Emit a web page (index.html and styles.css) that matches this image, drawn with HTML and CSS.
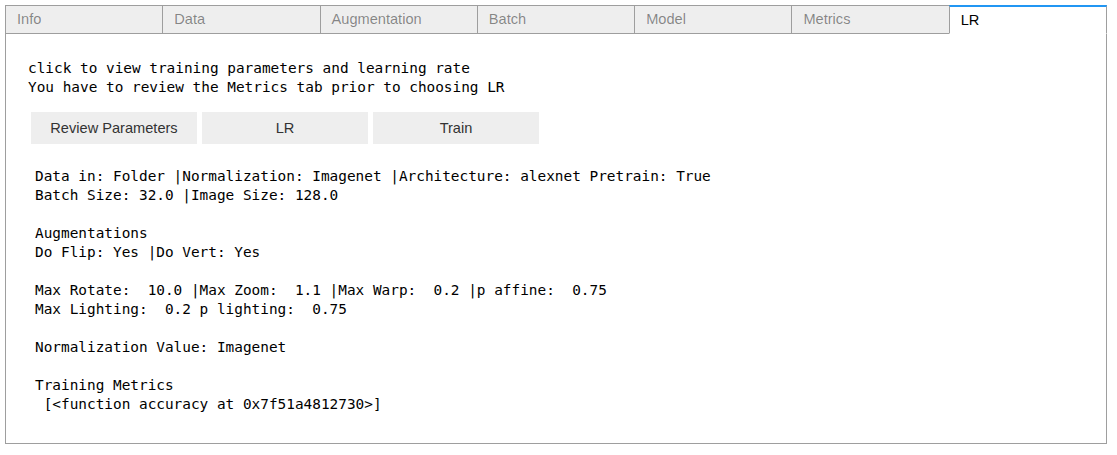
FILE: index.html
```html
<!DOCTYPE html>
<html>
<head>
<meta charset="utf-8">
<link rel="stylesheet" href="styles.css">
</head>
<body>
<div class="tabwidget">
  <div class="tabbar">
    <div class="tab">Info</div>
    <div class="tab">Data</div>
    <div class="tab">Augmentation</div>
    <div class="tab">Batch</div>
    <div class="tab">Model</div>
    <div class="tab">Metrics</div>
    <div class="tab active">LR</div>
  </div>
  <div class="panel">
    <div class="intro">click to view training parameters and learning rate<br>You have to review the Metrics tab prior to choosing LR</div>
    <div class="buttons">
      <button class="btn">Review Parameters</button>
      <button class="btn">LR</button>
      <button class="btn">Train</button>
    </div>
<pre class="output">Data in: Folder |Normalization: Imagenet |Architecture: alexnet Pretrain: True
Batch Size: 32.0 |Image Size: 128.0

Augmentations
Do Flip: Yes |Do Vert: Yes

Max Rotate:  10.0 |Max Zoom:  1.1 |Max Warp:  0.2 |p affine:  0.75
Max Lighting:  0.2 p lighting:  0.75

Normalization Value: Imagenet

Training Metrics
 [&lt;function accuracy at 0x7f51a4812730&gt;]</pre>
  </div>
</div>
</body>
</html>
```
FILE: styles.css
```css
html, body {
  margin: 0;
  padding: 0;
  background: #ffffff;
}

.tabwidget {
  padding: 5px 0 0 5px;
  width: 1102px;
}

.tabbar {
  display: flex;
  height: 29px;
}

.tab {
  flex: 1 1 0;
  box-sizing: border-box;
  height: 29px;
  border: 1px solid #9e9e9e;
  margin-left: -1px;
  background: #eeeeee;
  color: rgba(0, 0, 0, 0.45);
  font-family: "Liberation Sans", Arial, sans-serif;
  font-size: 14.6px;
  line-height: 27px;
  padding: 0 11px;
  white-space: nowrap;
  overflow: hidden;
}

.tab:first-child {
  margin-left: 0;
}

.tab.active {
  position: relative;
  z-index: 1;
  background: #ffffff;
  color: #000000;
  border-top: 2px solid #2196f3;
  border-bottom-color: #ffffff;
  line-height: 26px;
}

.panel {
  margin-top: -1px;
  border: 1px solid #9e9e9e;
  padding: 15px 15px 29px 15px;
}

.intro {
  margin: 10px 0 0 7px;
  font-family: "DejaVu Sans Mono", "Liberation Mono", monospace;
  font-size: 14.4px;
  line-height: 19px;
  color: #000000;
}

.buttons {
  display: flex;
  gap: 5px;
  margin: 15px 0 0 10px;
}

.btn {
  width: 166px;
  height: 32px;
  border: none;
  margin: 0;
  padding: 0 6px;
  background: #eeeeee;
  color: #333333;
  font-family: "Liberation Sans", Arial, sans-serif;
  font-size: 14.6px;
}

.output {
  margin: 23px 0 0 14px;
  font-family: "DejaVu Sans Mono", "Liberation Mono", monospace;
  font-size: 14.4px;
  line-height: 19px;
  color: #000000;
}
```
